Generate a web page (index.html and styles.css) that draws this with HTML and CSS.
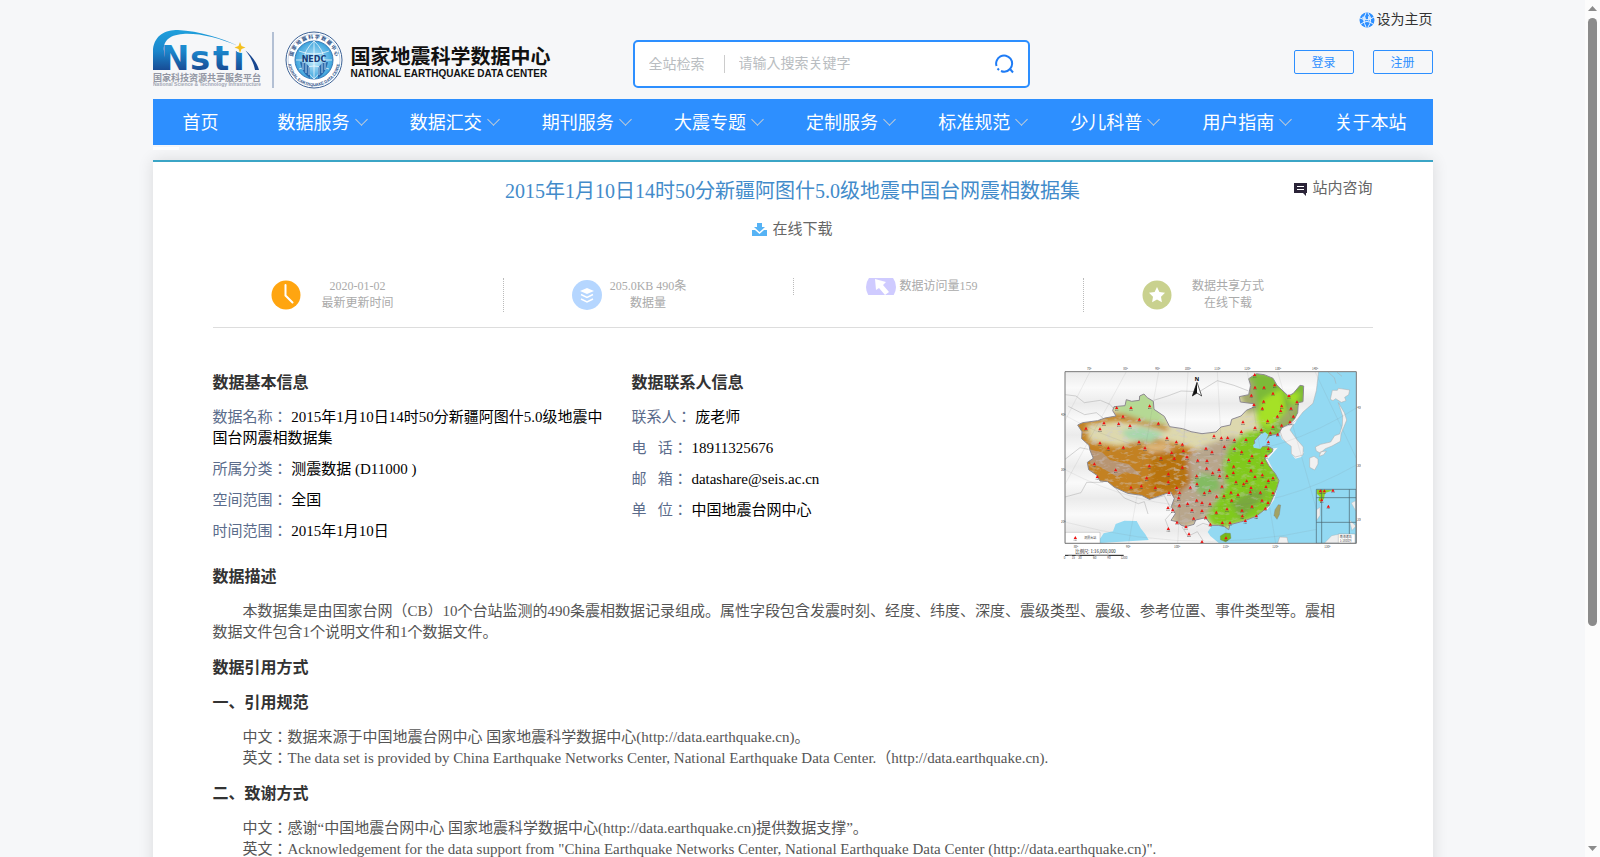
FILE: index.html
```html
<!DOCTYPE html>
<html>
<head>
    <meta charset="UTF-8">
    <meta name="viewport" content="width=device-width, initial-scale=1.0">
    <title>国家地震科学数据中心</title>
    <link rel="stylesheet" href="styles.css">
</head>
<body>
    <div class="container">
        <header class="header">
            <a class="logo" href="#">
                <svg class="logo-nsti" viewBox="0 0 108 60" width="108" height="60">
                    <defs>
                        <linearGradient id="nsti" x1="0" y1="0" x2="0" y2="42" gradientUnits="userSpaceOnUse">
                            <stop offset="0" stop-color="#1fa0dc"/>
                            <stop offset=".5" stop-color="#1b86cc"/>
                            <stop offset="1" stop-color="#17468f"/>
                        </linearGradient>
                    </defs>
                    <path d="M0 40V19C2 5 12 0 25 0c21 1 44 8 60 16C66 8 46 3 30 4 15 5 10 12 11 21c0 6 2 10 5 14v5z" fill="url(#nsti)"/>
                    <path d="M92 20c7 6 12 13 14 20h-4c-1-7-5-14-10-20z" fill="#17468f"/>
                    <text class="nsti-text" x="8" y="40" fill="url(#nsti)">N</text>
                    <text class="nsti-text" x="37" y="40" fill="url(#nsti)">s</text>
                    <text class="nsti-text" x="60" y="40" fill="url(#nsti)">t</text>
                    <text class="nsti-text" x="80" y="40" fill="url(#nsti)">i</text>
                    <circle cx="88" cy="17" r="6" fill="#f6f7f9"/>
                    <path d="M87 12l1.500 4 4 1.500-4 1.500-1.500 4-1.500-4-4-1.500 4-1.500z" fill="#f4c01e"/>
                    <text class="nsti-cn" x="0" y="51">国家科技资源共享服务平台</text>
                    <text class="nsti-en" x="0" y="56">National Science &amp; Technology Infrastructure</text>
                </svg>
                <span class="logo-line"></span>
                <svg class="logo-emblem" viewBox="0 0 58 58" width="58" height="58">
                    <defs>
                        <path id="ring-top" d="M9 37A21.500 21.500 0 1 1 49 37"/>
                        <path id="ring-bottom" d="M3.500 34A26 26 0 0 0 54.500 34"/>
                        <radialGradient id="globe">
                            <stop offset="0" stop-color="#c8efff"/>
                            <stop offset="1" stop-color="#3ba3dc"/>
                        </radialGradient>
                    </defs>
                    <circle cx="29" cy="29" r="28" fill="#fff" stroke="#3d6296"/>
                    <circle cx="29" cy="29" r="26" fill="none" stroke="#8ba6c8" stroke-width=".5"/>
                    <circle cx="29" cy="29" r="19" fill="url(#globe)" stroke="#3779b5"/>
                    <path d="M11 29h36M14 20q15 6 30 0M14 38q15-6 30 0M29 10v38M29 10q-20 19 0 38M29 10q20 19 0 38" fill="none" stroke="#fff" stroke-width=".7"/>
                    <path d="M15 31c2 9 5 13 10 16V37l-4-5zM43 31c-2 9-5 13-10 16V37l4-5z" fill="#2a69ac"/>
                    <path d="M18 31v8M21 32v10M24 36v8M40 31v8M37 32v10M34 36v8" stroke="#d7f0fb" stroke-width=".8"/>
                    <text class="emblem-name" x="29" y="31">NEDC</text>
                    <text class="emblem-cn"><textPath href="#ring-top" startOffset="50%">国 家 地 震 科 学 数 据 中 心</textPath></text>
                    <text class="emblem-en"><textPath href="#ring-bottom" startOffset="50%">NATIONAL EARTHQUAKE DATA CENTER</textPath></text>
                </svg>
                <span class="logo-title">
                    <strong>国家地震科学数据中心</strong>
                    <span>NATIONAL EARTHQUAKE DATA CENTER</span>
                </span>
            </a>

            <form class="search">
                <select class="search-type" aria-label="检索范围">
                    <option>全站检索</option>
                </select>
                <input class="search-input" type="text" placeholder="请输入搜索关键字" aria-label="搜索">
                <button class="search-button" type="button" aria-label="搜索">
                    <svg viewBox="0 0 20 20" width="20" height="20" fill="none" stroke="#1f7cf5" stroke-width="2">
                        <path d="M2.500 12A8 8 0 1 1 16 15l3 3.500M16 15A8 8 0 0 1 7 17"/>
                        <path d="M3.500 14.500l1.500 1.500"/>
                    </svg>
                </button>
            </form>

            <div class="user">
                <a class="set-home" href="#">
                    <svg viewBox="0 0 16 16" width="16" height="16">
                        <circle cx="8" cy="8" r="7.500" fill="#2d8fff"/>
                        <path d="M1 6q7 4 14-1M2 12q6-5 12 0M7 1Q3 8 7 15M9 1q5 7 0 14" fill="none" stroke="#eaf4ff"/>
                        <path d="M3 5l3-1 1 3-2 3zM9 4l3 1-1 3-2 1z" fill="#d5e9ff"/>
                    </svg>
                    设为主页
                </a>
                <div class="user-buttons">
                    <button type="button">登录</button>
                    <button type="button">注册</button>
                </div>
            </div>
        </header>

        <nav class="nav">
            <a class="nav-home" href="#">首页</a>
            <a class="has-menu" href="#">数据服务</a>
            <a class="has-menu" href="#">数据汇交</a>
            <a class="has-menu" href="#">期刊服务</a>
            <a class="has-menu" href="#">大震专题</a>
            <a class="has-menu" href="#">定制服务</a>
            <a class="has-menu" href="#">标准规范</a>
            <a class="has-menu" href="#">少儿科普</a>
            <a class="has-menu" href="#">用户指南</a>
            <a href="#">关于本站</a>
        </nav>
        <div class="nav-tab"></div>

        <main class="card">
            <div class="title-row">
                <h1>2015年1月10日14时50分新疆阿图什5.0级地震中国台网震相数据集</h1>
                <a class="consult" href="#">
                    <svg viewBox="0 0 13 14" width="13" height="14">
                        <path d="M0 1h13v10h-1v3l-3-3H0z" fill="#2b2438"/>
                        <path d="M3 4.500h7M3 7.500h7" stroke="#fff" stroke-width="1"/>
                    </svg>
                    站内咨询
                </a>
            </div>
            <a class="download" href="#">
                <svg viewBox="0 0 15 13" width="15" height="13">
                    <path d="M5 0h5v4h3L7.500 9 2 4h3z" fill="#56b3f5"/>
                    <path d="M0 7h3l4.500 4L12 7h3v6H0z" fill="#56b3f5"/>
                </svg>
                在线下载
            </a>

            <div class="stats">
                <div class="stat">
                    <svg viewBox="0 0 30 30" width="30" height="30">
                        <circle cx="15" cy="15" r="14.500" fill="#ffa510"/>
                        <path d="M14.500 5v10.500l7 7" fill="none" stroke="#fff" stroke-width="2" stroke-linecap="round"/>
                    </svg>
                    <p>2020-01-02<br>最新更新时间</p>
                </div>
                <div class="stat stat-size">
                    <svg viewBox="0 0 30 30" width="30" height="30">
                        <circle cx="15" cy="15" r="15" fill="#b5d6ff"/>
                        <path d="M15 8l7 3-7 3-7-3z" fill="#fff"/>
                        <path d="M9 14.500l6 3 6-3M9 19l6 3 6-3" fill="none" stroke="#fff" stroke-width="1.500"/>
                    </svg>
                    <p>205.0KB 490条<br>数据量</p>
                </div>
                <div class="stat stat-visits">
                    <svg viewBox="0 6 30 17" width="30" height="17">
                        <circle cx="15" cy="15" r="15" fill="#cfcbff"/>
                        <path d="M9 7l11 3-3 3 6 7-4 3-6-7-3 2z" fill="#fff"/>
                    </svg>
                    <p>数据访问量159</p>
                </div>
                <div class="stat">
                    <svg viewBox="0 0 30 30" width="30" height="30">
                        <circle cx="15" cy="15" r="14.500" fill="#c9d18e"/>
                        <path d="M15 7l2.400 5 5.600.8-4 3.900.9 5.500-4.900-2.600-4.900 2.600.9-5.500-4-3.900 5.600-.8z" fill="#fff"/>
                    </svg>
                    <p>数据共享方式<br>在线下载</p>
                </div>
            </div>

            <div class="info">
                <section>
                    <h2>数据基本信息</h2>
                    <p><span>数据名称：</span> 2015年1月10日14时50分新疆阿图什5.0级地震中国台网震相数据集</p>
                    <p><span>所属分类：</span> 测震数据 (D11000 )</p>
                    <p><span>空间范围：</span> 全国</p>
                    <p><span>时间范围：</span> 2015年1月10日</p>
                </section>
                <section>
                    <h2>数据联系人信息</h2>
                    <p><span>联系人：</span> 庞老师</p>
                    <p><span>电&nbsp;&nbsp;&nbsp;话：</span> 18911325676</p>
                    <p><span>邮&nbsp;&nbsp;&nbsp;箱：</span> datashare@seis.ac.cn</p>
                    <p><span>单&nbsp;&nbsp;&nbsp;位：</span> 中国地震台网中心</p>
                </section>
                <svg class="map" viewBox="40 30 900 582" width="300" height="194">
                    <defs>
                        <marker id="station" viewBox="0 0 12 14" refX="6" refY="5" markerWidth="12" markerHeight="14" markerUnits="userSpaceOnUse">
                            <path d="M6 0l5 9H1z" fill="#e11"/>
                            <path d="M1 12.500h10" stroke="#555" stroke-width="2" stroke-dasharray="3 1"/>
                        </marker>
                        <linearGradient id="land" x1="0" y1="0" x2="0" y2="95" gradientUnits="userSpaceOnUse" spreadMethod="repeat">
                            <stop offset="0" stop-color="#fafafa"/>
                            <stop offset=".5" stop-color="#ebebeb"/>
                            <stop offset="1" stop-color="#fafafa"/>
                        </linearGradient>
                        <filter id="soft"><feGaussianBlur stdDeviation="8"/></filter>
                        <filter id="grain" x="0" y="0" width="1" height="1">
                            <feTurbulence type="fractalNoise" baseFrequency=".04 .09" numOctaves="3"/>
                            <feColorMatrix values="0 0 0 0 .62  0 0 0 0 .6  0 0 0 0 .66  5 0 0 0 -2.600"/>
                        </filter>
                        <clipPath id="frame"><path d="M52 47h874v515H52z"/></clipPath>
                        <path id="china" d="M90 207L105 200 150 194 172 186 205 180 195 164 199 152 232 149 236 131 252 136 275 133 276 120 289 114 299 125 317 136 319 160 350 181 366 212 405 218 430 227 463 233 505 228 520 213 548 207 552 190 580 180 596 163 619 153 617 143 578 138 575 122 603 116 609 88 603 68 626 53 650 56 676 67 688 88 722 120 737 112 757 88 768 90 766 137 752 140 750 170 740 190 725 204 704 214 692 234 667 238 650 256 656 237 641 232 620 254 624 274 659 270 676 279 674 287 651 306 663 328 683 353 694 374 687 398 676 424 666 447 650 462 625 481 586 496 547 506 543 521 531 512 512 508 491 508 474 485 444 492 439 505 414 512 401 508 388 497 370 493 383 473 371 452 380 427 369 408 340 418 305 430 282 418 240 412 199 393 180 377 157 375 148 358 123 341 119 319 137 307 127 283 124 268 102 248 103 227z"/>
                        <clipPath id="inside"><use href="#china"/></clipPath>
                    </defs>
                    <g clip-path="url(#frame)">
                        <path d="M52 47h874v515H52z" fill="url(#land)"/>
                        <!-- seas -->
                        <path d="M813 47L806 104 796 142 766 168 748 191 741 203 726 207 717 222 732 247 748 259 755 275 768 289 761 303 743 308 732 294 730 269 718 259 703 250 694 229 655 228 610 260 640 284 690 275 660 310 694 375 680 430 660 460 580 499 490 510 500 540 530 562H926V47z" fill="#93d9f2"/>
                        <path d="M148 562l20-30 28-6 8-22 26-10 37 1 12 22 14 18 10 17z" fill="#93d9f2"/>
                        <path d="M496 505l-16 23 8 12 26 22 55 0-20-40z" fill="#93d9f2"/>
                        <!-- neighbouring land -->
                        <g fill="#f1f1f1" stroke="#aaa" stroke-width="1.500">
                            <path d="M854 103l15 0 3-6 34 5-3 14-12 8 4 10-14 5-17-11-8 6-8-4zM872 140l18 30 7 22-17 42-2 22-25 14-20 8-15 13-12-6-3-12 16-8 30-7 12-19 15-5 8-26 1-28zM786 306l13-5 12 8 0 15-10 18-15-8zM819 287l17-2-8 11-13 5zM704 214l34-10-11 18 20 28 20 23-1 24-23 6-12-10 0-22-14-10-13-15-8-24zM690 562l6-19 22 1 4 18zM806 461l11-7 0 24-11 15z"/>
                        </g>
                        <g fill="none" stroke="#aaa" stroke-width="1.500">
                            <path d="M840 47l20 18 5 18M868 49l15 12M813 47l-7 57-10 38-30 26-18 23-22 16M53 116l32 4 25 20 48-7 29 12 18 22M62 151l49 25 35-6 20 16M318 133l42-13 40-15 55 2 54-33 50 14 44 17M52 310l45-35 25 5M52 423l48-13 17-31 50 0M203 396l27 30 42 17 18-6 11 37M305 430l45-11 24 48-21 24 14 37M403 513l18 28 28-14 18 28M489 509l-23-7-20 10"/>
                        </g>
                        <!-- relief -->
                        <g clip-path="url(#inside)">
                            <use href="#china" fill="#ddd8ae"/>
                            <g filter="url(#soft)">
                                <path d="M80 190l120-18 70 4 95 38-10 10-90-22-60-8-90 12 8 50 90 16 60-15 50-9 80 20 60 20 20 80-70 80-180-4-120-60-30-100z" fill="#c38120"/>
                                <path d="M190 120l80-20 60 30 10 40 20 35-60-7-90-30z" fill="#b5d994"/>
                                <path d="M220 225l60-13 70 20-40 28-70-12z" fill="#a7d7ac"/>
                                <path d="M280 265l70-3 60 38-40 13-60-20z" fill="#deb77a"/>
                                <path d="M310 290l90-10 50 80-40 50-100-10z" fill="#b8730b"/>
                                <path d="M420 300l50-30 90-30 50 80-60 140-160 60-30-80 70-60z" fill="#b8a68c"/>
                                <path d="M590 40l200 30-20 130-120 60-30-110z" fill="#7cba38"/>
                                <path d="M645 130l58-33 10 70-50 53-38-25zM710 110l50 0-20 40z" fill="#a5e126"/>
                                <path d="M575 105l40-40 15 90-30 20zM730 150l-40 50 20 15 50-65z" fill="#a1a86b"/>
                                <path d="M595 230l70-10 30 110 10 80-60 70-140 40-30-40 60-90-10-60 20-60z" fill="#80ca1d"/>
                                <path d="M455 350l55 10 10 40-60 20-25-40z" fill="#83bb62"/>
                                <path d="M550 440l70-40 40 10-80 80z" fill="#79a93c"/>
                            </g>
                            <path d="M125 280l40 10 22 22 55 12 40 36-50-12-24 14-50-29-30-10z" fill="#b0a4a8" opacity=".6"/>
                            <path d="M90 180h370v270H90z" filter="url(#grain)" opacity=".4"/>
                            <path d="M380 180h330v340H380z" filter="url(#grain)" opacity=".3"/>
                        </g>
                        <use href="#china" fill="none" stroke="#8d8990" stroke-width="3"/>
                        <path d="M616 267l18-14 3-15 15-10 10 8-12 27-12 16-20-4z" fill="#93d9f2"/>
                        <path d="M518 540l14-9 16 1 2 15-16 11-16-7z" fill="#75ba19" stroke="#777"/>
                        <path d="M682 461l10-15 7 1-4 29-7 14-9-12z" fill="#a2a363" stroke="#777"/>
                        <path d="M127 47L52 194M236 47L52 385M333 47L243 562M421 47L390 562M509 47l28 515M599 47l85 515M690 47l145 515M802 47l124 260M52 178q440 250 874-22M52 341q440 230 874-14M52 498q440 120 874-8" fill="none" stroke="#777" stroke-opacity=".35"/>
                        <!-- inset -->
                        <path d="M806 400h119v162H806z" fill="#93d9f2"/>
                        <path d="M807 401l50 2-25 8-3 18-10 9-7-5 4-12-9-8z" fill="#8ed320"/>
                        <path d="M807 461l10-7 0 24-10 15zM911 441l13-7v30zM905 492l20 18-12 13zM830 562l22-23 27-5 44 3v25z" fill="#eee" stroke="#aaa"/>
                        <path d="M806 400h119v162H806zM806 499h119M822 400v162M905 400v162M806 425h119" fill="none" stroke="#47606b" stroke-width="2"/>
                        <path d="M872 534h50v27h-50zM52 529h105v33H52z" fill="#fff" stroke="#888"/>
                        <polyline points="621,56 681,87 622,94 649,94 676,112 611,118 724,119 648,136 748,138 619,146 702,150 644,157 730,157 699,164 689,181 737,181 660,195 727,198 702,208 676,212 622,215 641,222 668,231 690,235 207,155 250,155 306,150 226,181 275,190 213,203 247,209 332,202 169,201 115,217 157,219 157,261 182,276 227,274 274,258 292,276 358,246 386,258 404,265 407,284 372,290 418,303 340,306 380,307 404,334 450,313 478,314 493,288 475,277 499,240 521,246 540,245 560,252 586,198 581,227 595,251 582,288 530,272 560,278 543,311 558,331 514,341 495,351 477,337 305,330 140,324 204,342 149,362 297,366 362,354 362,378 250,394 281,390 323,395 387,395 364,410 396,410 428,394 448,384 447,360 516,360 538,360 557,350 565,378 597,375 588,384 610,343 605,314 613,300 643,320 655,299 662,258 662,278 622,362 644,357 662,374 676,366 610,395 655,392 638,409 608,408 676,411 571,416 550,409 529,420 507,421 486,404 470,411 523,391 393,426 420,443 447,433 463,440 395,448 375,462 433,462 463,464 487,444 506,469 538,459 552,433 583,463 613,451 643,433 661,440 653,457 584,480 626,480 593,494 547,500 524,500 488,505 474,484 438,487 388,499 361,455 362,518 415,512 424,534 463,557 535,546 83,545 818,405 830,405 856,403 822,432 842,451" fill="none" marker-start="url(#station)" marker-mid="url(#station)" marker-end="url(#station)"/>
                        <text class="map-note" x="110" y="549">测震台站</text>
                        <text class="map-note" x="876" y="545">南海诸岛</text>
                        <text class="map-note" x="876" y="557">1:1800万</text>
                    </g>
                    <path d="M52 47h874v515H52z" fill="none" stroke="#777" stroke-width="3"/>
                    <text class="map-north" x="441" y="74">N</text>
                    <path d="M448 79l14 41-14-9-14 9z" fill="#fff" stroke="#111" stroke-width="2"/>
                    <path d="M448 79v32l-14 9z" fill="#111"/>
                    <g class="map-note">
                        <text x="118" y="41">70°</text><text x="227" y="41">80°</text><text x="323" y="41">90°</text><text x="411" y="41">100°</text><text x="500" y="41">110°</text><text x="590" y="41">120°</text><text x="682" y="41">130°</text><text x="793" y="41">140°</text>
                        <text x="78" y="576">80°</text><text x="235" y="576">90°</text><text x="379" y="576">100°</text><text x="525" y="576">110°</text><text x="674" y="576">120°</text><text x="830" y="576">130°</text>
                        <text x="40" y="181">40°</text><text x="40" y="345">30°</text><text x="40" y="502">20°</text><text x="929" y="160">40°</text><text x="929" y="332">30°</text><text x="929" y="494">20°</text>
                        <text x="48" y="610">0</text><text x="72" y="610">15</text><text x="92" y="610">30</text><text x="136" y="610">60</text><text x="179" y="610">90</text><text x="219" y="610">1200</text>
                    </g>
                    <text class="map-scale" x="83" y="592">比例尺: 1:16,000,000</text>
                    <path d="M52 598h176" stroke="#111" stroke-width="3"/>
                    <path d="M62 598h11M84 598h12M140 598h43" stroke="#bbb" stroke-width="2"/>
                </svg>
            </div>

            <section class="detail">
                <h2>数据描述</h2>
                <p>本数据集是由国家台网（CB）10个台站监测的490条震相数据记录组成。属性字段包含发震时刻、经度、纬度、深度、震级类型、震级、参考位置、事件类型等。震相数据文件包含1个说明文件和1个数据文件。</p>
                <h2>数据引用方式</h2>
                <h2>一、引用规范</h2>
                <p>中文：数据来源于中国地震台网中心 国家地震科学数据中心(http://data.earthquake.cn)。</p>
                <p>英文：The data set is provided by China Earthquake Networks Center, National Earthquake Data Center.（http://data.earthquake.cn).</p>
                <h2>二、致谢方式</h2>
                <p>中文：感谢“中国地震台网中心 国家地震科学数据中心(http://data.earthquake.cn)提供数据支撑”。</p>
                <p>英文：Acknowledgement for the data support from "China Earthquake Networks Center, National Earthquake Data Center (http://data.earthquake.cn)".</p>
            </section>
        </main>
    </div>

    <div class="scrollbar" aria-hidden="true">
        <svg viewBox="0 0 9 5" width="9" height="5"><path d="M0 5l4.500-5L9 5z" fill="#8b8b8b"/></svg>
        <div class="scrollbar-track"><div class="scrollbar-thumb"></div></div>
        <svg viewBox="0 0 9 5" width="9" height="5"><path d="M0 0l4.500 5L9 0z" fill="#8b8b8b"/></svg>
    </div>
</body>
</html>
```

FILE: styles.css
```css
* {
    box-sizing: border-box;
}

html {
    scrollbar-width: none;
}

body {
    margin: 0;
    padding-right: 15px;
    background-color: #f6f7f9;
    font-family: "Liberation Serif", "Noto Sans CJK JP", serif;
    color: #333;
}

a {
    color: inherit;
    text-decoration: none;
}

h1, h2, p {
    margin: 0;
}

svg {
    flex: none;
}

.container {
    max-width: 1280px;
    margin: 0 auto;
}

/* Header */
.header {
    display: flex;
    justify-content: space-between;
    height: 99px;
}

.logo {
    display: flex;
    align-items: flex-start;
    padding-top: 30px;
    width: 480px;
}

.logo-line {
    width: 2px;
    height: 56px;
    margin: 2px 11px 0;
    background: #b3c0d4;
}

.logo-emblem {
    margin-top: 1px;
}

.nsti-text {
    font: bold 34px "DejaVu Sans", sans-serif;
}

.nsti-cn {
    font: bold 9px "Noto Sans CJK SC", sans-serif;
    fill: #9296a3;
}

.nsti-en {
    font: bold 5px "Liberation Sans", sans-serif;
    fill: #a3a7b5;
}

.emblem-name {
    font: bold 8px "DejaVu Sans", sans-serif;
    fill: #173c78;
    text-anchor: middle;
}

.emblem-cn {
    font: bold 5px "Noto Sans CJK SC", sans-serif;
    fill: #2c5288;
    text-anchor: middle;
}

.emblem-en {
    font: bold 4px "Liberation Sans", sans-serif;
    fill: #2c5288;
    text-anchor: middle;
}

.logo-title {
    display: flex;
    flex-direction: column;
    margin: 13px 0 0 8px;
    color: #111;
    font: bold 10px/12px "Liberation Sans", sans-serif;
    white-space: nowrap;
}

.logo-title strong {
    font: bold 20px/25px "Noto Sans CJK SC", sans-serif;
}

.search {
    display: flex;
    align-items: center;
    width: 397px;
    height: 48px;
    margin-top: 40px;
    padding: 0 14px;
    border: 2px solid #2d8fff;
    border-radius: 5px;
    background: #fff;
}

.search-type,
.search-input {
    border: 0;
    background: none;
    color: #b9bdc1;
    font: 14px "Liberation Serif", "Noto Sans CJK JP", serif;
    outline: none;
}

.search-type {
    width: 76px;
    height: 18px;
    padding: 0;
    border-right: 1px solid #ccc;
    border-radius: 0;
    line-height: 17px;
    appearance: none;
}

.search-input {
    flex: 1;
    min-width: 0;
    padding: 0 14px;
}

.search-input::placeholder {
    color: #b9bdc1;
}

.search-button {
    display: flex;
    padding: 0;
    border: 0;
    background: none;
    cursor: pointer;
}

.user {
    display: flex;
    flex-direction: column;
    align-items: flex-end;
    gap: 20px;
    width: 403px;
    padding-top: 9px;
}

.set-home {
    display: flex;
    align-items: center;
    gap: 2px;
    font-size: 14px;
    line-height: 21px;
}

.user-buttons {
    display: flex;
    gap: 19px;
}

.user-buttons button {
    width: 60px;
    height: 24px;
    padding: 0;
    border: 1px solid #2d8fff;
    border-radius: 2px;
    background: none;
    color: #2d8fff;
    font: 12px "Liberation Serif", "Noto Sans CJK JP", serif;
    cursor: pointer;
}

/* Navigation */
.nav {
    display: flex;
    align-items: center;
    justify-content: space-between;
    height: 46px;
    padding: 0 26px 2px 30px;
    background: #2d8fff;
    color: #fff;
    font-size: 18px;
}

.nav-home {
    width: 52px;
}

.has-menu {
    display: flex;
    align-items: center;
    gap: 7px;
}

.has-menu::after {
    content: "";
    width: 8px;
    height: 8px;
    margin: 0 1px 4px 0;
    border: solid #c3cdd6;
    border-width: 0 1px 1px 0;
    transform: rotate(45deg);
}

.nav-tab {
    width: 26px;
    height: 3px;
    margin: 2px 0 10px;
    background: #fff;
}

/* Content */
.card {
    min-height: 1010px;
    padding: 16px 60px 0;
    border-top: 2px solid #3ba5c6;
    background: #fff;
    box-shadow: 0 0 15px rgba(0, 0, 0, 0.12);
}

.title-row {
    display: grid;
    grid-template-columns: 1fr auto 1fr;
    align-items: start;
}

h1 {
    grid-column: 2;
    color: #428bca;
    font-size: 20px;
    font-weight: normal;
    line-height: 26px;
}

.consult,
.download {
    display: flex;
    align-items: center;
    justify-content: center;
    gap: 5px;
    color: #666;
    font-size: 15px;
    line-height: 21px;
}

.consult {
    justify-self: end;
}

.download {
    margin-top: 15px;
}

.stats {
    display: grid;
    grid-template-columns: repeat(4, 1fr);
    align-items: start;
    margin-top: 38px;
    padding-bottom: 15px;
    border-bottom: 1px solid #ddd;
}

.stat {
    display: grid;
    grid-template-columns: 1fr auto 1fr;
    align-items: end;
    column-gap: 20px;
    min-height: 34px;
    color: #aaa;
    font-size: 12px;
    line-height: 17px;
    text-align: center;
}

.stat + .stat {
    border-left: 1px dotted #bbb;
}

.stat svg {
    justify-self: end;
    align-self: center;
}

.stat-size {
    column-gap: 8px;
}

.stat-visits {
    display: flex;
    column-gap: 4px;
    min-height: 17px;
    padding-left: 72px;
}

.info {
    display: grid;
    grid-template-columns: 13fr 13fr 10fr;
    margin-top: 38px;
}

.info section {
    padding: 6px 20px 0 0;
}

.info p {
    margin-bottom: 10px;
    color: #000;
    font-size: 15px;
    line-height: 21px;
}

.info span {
    color: #5b6c8b;
}

.map {
    justify-self: center;
}

.map-note {
    font: 9px "Noto Sans CJK SC", sans-serif;
    fill: #444;
}

.map-north {
    font: bold 18px "Liberation Sans", sans-serif;
}

.map-scale {
    font: 13px "Noto Sans CJK SC", sans-serif;
    fill: #222;
}

h2 {
    margin-bottom: 14px;
    font-size: 16px;
    line-height: 21px;
}

.detail {
    padding: 6px 30px 0 0;
}

.detail p {
    color: #555;
    font-size: 15px;
    line-height: 21px;
    text-indent: 2em;
}

.detail p + h2 {
    margin-top: 14px;
}

/* Scrollbar */
.scrollbar {
    position: fixed;
    top: 0;
    right: 0;
    bottom: 0;
    display: flex;
    flex-direction: column;
    align-items: center;
    width: 15px;
    padding: 6px 0;
    background: #fcfcfc;
}

.scrollbar-track {
    flex: 1;
    padding: 7px 0;
}

.scrollbar-thumb {
    width: 9px;
    height: 74%;
    border-radius: 5px;
    background: #8b8b8b;
}

.scrollbar-track {
    display: flex;
}
```
